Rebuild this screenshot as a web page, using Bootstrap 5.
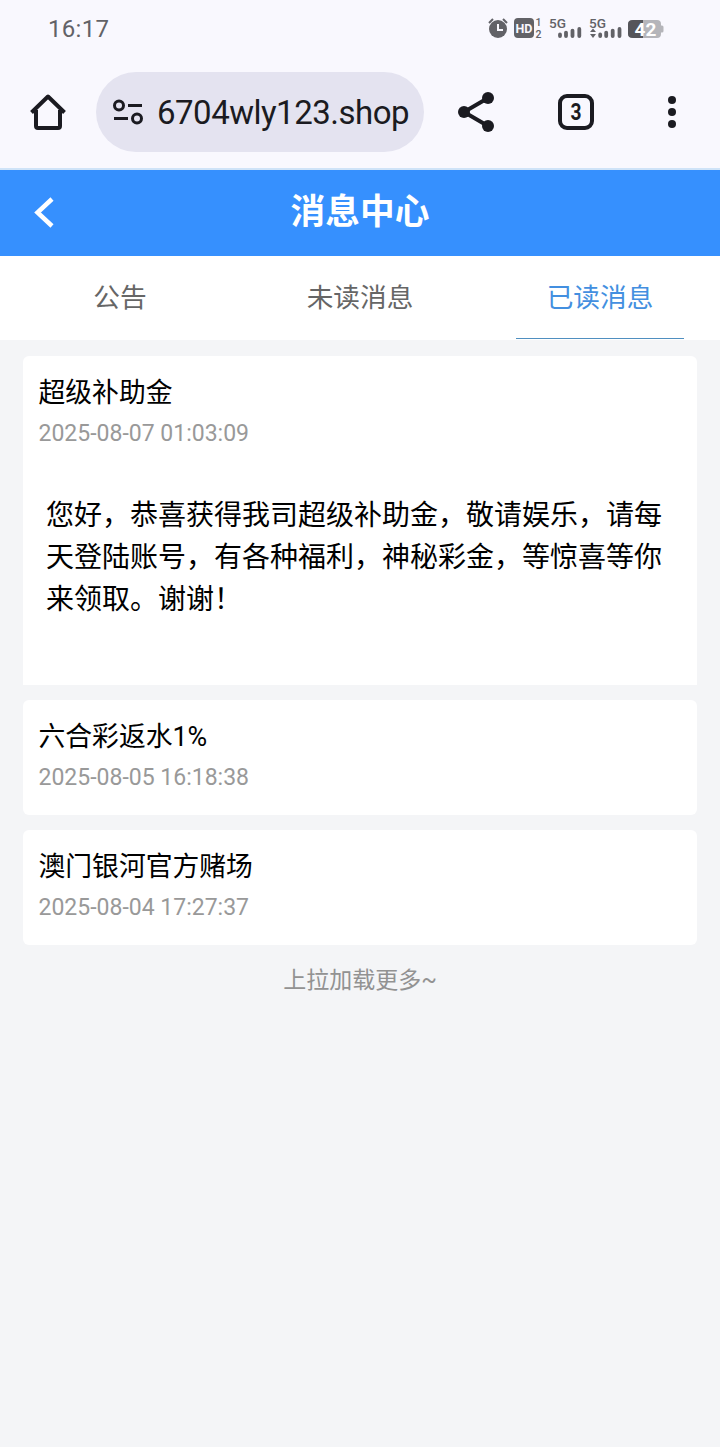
<!DOCTYPE html>
<html lang="zh-CN">
<head>
<meta charset="utf-8">
<meta name="viewport" content="width=device-width, initial-scale=1">
<title>消息中心</title>
<link href="https://cdn.jsdelivr.net/npm/bootstrap@5.3.0/dist/css/bootstrap.min.css" rel="stylesheet">
<style>
  body { font-family: Roboto, "Noto Sans CJK SC", sans-serif; background: #f4f5f7; color: #000; min-height: 1447px; }
  svg { display: block; flex: none; }
  svg text { font-family: Roboto, sans-serif; }
  .browser-top { background: #f9f8fe; height: 170px; border-bottom: 2px solid #cfe3f8; }
  .status-bar { height: 56px; padding: 0 54px 0 48px; color: #626267; }
  .clock { font-size: 24px; letter-spacing: .3px; line-height: 56px; padding-top: 2px; }
  .tool-bar { height: 112px; padding-left: 28px; color: #1b1b21; }
  .address { width: 328px; height: 80px; margin-left: 28px; padding-left: 16px; background: #e4e3f0; }
  .address-text { width: 250px; margin-left: 13px; font-size: 33px; letter-spacing: -.5px; line-height: 78px; padding-top: 2px; }
  .app-bar { height: 86px; background: #3690fe; color: #fff; }
  .app-bar h1 { font-size: 34.7px; line-height: 80px; padding-bottom: 2px; }
  .back-btn { width: 28px; margin-left: 30px; }
  .tabs { height: 84px; background: #fff; }
  .tabs .nav-link { font-size: 26.7px; line-height: 81px; height: 83px; padding: 2px 0 0; width: 168px; color: #666; border-bottom: 1px solid transparent; border-radius: 0; }
  .tabs .nav-link.active { color: #438fe0; border-color: #4f8fc0; }
  .messages { padding: 16px 23px 0; gap: 15px; }
  .message { border: 0; border-radius: 6px; }
  .message.opened { border-radius: 6px 6px 0 0; }
  .message-head { height: 115px; padding: 17px 15.5px 0; }
  .message-title { font-size: 26.8px; line-height: 41px; font-weight: 400; }
  .message-time { font-size: 23px; line-height: 40px; color: #999; }
  .message-body { font-size: 28px; line-height: 42px; height: 214px; padding: 24px 20px 0 23px; }
  .load-more { font-size: 23px; line-height: 70px; padding-top: 1px; color: #929292; }
</style>
</head>
<body>
<header class="browser-top">
  <div class="status-bar d-flex align-items-center justify-content-between">
    <span class="clock">16:17</span>
    <svg width="180" height="28" viewBox="486 14 180 28" fill="currentColor">
      <circle cx="498" cy="29" r="9"/>
      <path d="M489 23l4-4M507 23l-4-4" stroke="currentColor" stroke-width="2"/>
      <path d="M498 24v6h5" fill="none" stroke="#f9f8fe" stroke-width="2"/>
      <rect x="514" y="18" width="20" height="20" rx="4"/>
      <text x="515.5" y="32.500" font-size="12" font-weight="700" fill="#f9f8fe" textLength="17" lengthAdjust="spacingAndGlyphs">HD</text>
      <text x="535.5" y="26" font-size="10.5" font-weight="500">1</text>
      <text x="535.5" y="37.500" font-size="10.500" font-weight="500">2</text>
      <text x="549" y="27.700" font-size="13" font-weight="500" textLength="17" lengthAdjust="spacingAndGlyphs">5G</text>
      <g stroke="currentColor" stroke-width="3.8" stroke-linecap="round">
        <path d="M560 34.400v1.700M566 32.600v3.500M572.500 30.600v5.500M579.300 28.900v7.200"/>
        <path d="M600.200 34.400v1.700M606.200 32.600v3.500M612.700 30.600v5.500M619.500 28.900v7.200"/>
      </g>
      <text x="589" y="27.700" font-size="13" font-weight="500" textLength="17" lengthAdjust="spacingAndGlyphs">5G</text>
      <path d="M590 32l3-3.500 3 3.500zM590 34l3 4 3-4z"/>
      <path d="M633 20h24q4 0 4 4v10q0 4-4 4h-24q-5 0-5-4V24q0-4 5-4zM661 25.500h1q1.500 0 1.500 1.500v4q0 1.500-1.500 1.500h-1z" fill="#b5b5ba"/>
      <path d="M633 20h10v18h-10q-5 0-5-4V24q0-4 5-4z" fill="#55555a"/>
      <text x="645.5" y="35.700" font-size="19" font-weight="700" text-anchor="middle" fill="#fff">42</text>
    </svg>
  </div>
  <div class="tool-bar d-flex align-items-center">
    <svg width="40" height="40" viewBox="28 92 40 40" fill="none" stroke="currentColor" stroke-width="4">
      <path d="M36 110v16q0 2 2 2h20q2 0 2-2v-16"/>
      <path d="M31.500 112.500L48 96.500l16.500 16" stroke-linejoin="round"/>
    </svg>
    <div class="address rounded-pill d-flex align-items-center">
      <svg width="32" height="28" viewBox="112 98 32 28" fill="none" stroke="currentColor" stroke-width="3">
        <circle cx="119" cy="105.500" r="4.500"/><circle cx="137" cy="118.500" r="4.500"/>
        <path d="M128 105.500h14M114 118.500h14"/>
      </svg>
      <div class="address-text text-nowrap">6704wly123.shop</div>
    </div>
    <svg width="48" height="48" viewBox="452 88 48 48" style="margin-left:28px" fill="currentColor">
      <path d="M488 98l-24 14 24 14" fill="none" stroke="currentColor" stroke-width="4"/>
      <circle cx="488" cy="98" r="6"/><circle cx="464" cy="112" r="6"/><circle cx="488" cy="126" r="6"/>
    </svg>
    <svg width="40" height="40" viewBox="556 92 40 40" style="margin-left:56px">
      <rect x="560" y="96" width="32" height="32" rx="7" fill="none" stroke="currentColor" stroke-width="4"/>
      <text x="570.5" y="120" font-size="23" font-weight="700" fill="currentColor" textLength="11" lengthAdjust="spacingAndGlyphs">3</text>
    </svg>
    <svg width="12" height="36" viewBox="666 94 12 36" style="margin-left:70px" fill="currentColor">
      <circle cx="672" cy="100" r="4"/><circle cx="672" cy="112" r="4"/><circle cx="672" cy="124" r="4"/>
    </svg>
  </div>
</header>
<div class="app-bar d-flex align-items-center">
  <a href="#" class="back-btn text-white" aria-label="返回">
    <svg width="28" height="34" viewBox="30 196 28 34" fill="none" stroke="currentColor" stroke-width="4.500"><path d="M52 199L37.500 212.500 52 226"/></svg>
  </a>
  <h1 class="flex-grow-1 text-center fw-bold m-0">消息中心</h1>
  <div style="width:58px"></div>
</div>
<ul class="tabs nav text-center">
  <li class="nav-item col-4"><a class="nav-link mx-auto" href="#">公告</a></li>
  <li class="nav-item col-4"><a class="nav-link mx-auto" href="#">未读消息</a></li>
  <li class="nav-item col-4"><a class="nav-link mx-auto active" href="#">已读消息</a></li>
</ul>
<main class="messages d-flex flex-column">
  <article class="message opened card">
    <div class="message-head"><h2 class="message-title m-0">超级补助金</h2><div class="message-time">2025-08-07 01:03:09</div></div>
    <div class="message-body">您好，恭喜获得我司超级补助金，敬请娱乐，请每天登陆账号，有各种福利，神秘彩金，等惊喜等你来领取。谢谢！</div>
  </article>
  <article class="message card">
    <div class="message-head"><h2 class="message-title m-0">六合彩返水1%</h2><div class="message-time">2025-08-05 16:18:38</div></div>
  </article>
  <article class="message card">
    <div class="message-head"><h2 class="message-title m-0">澳门银河官方赌场</h2><div class="message-time">2025-08-04 17:27:37</div></div>
  </article>
</main>
<div class="load-more text-center">上拉加载更多~</div>
<script src="https://cdn.jsdelivr.net/npm/bootstrap@5.3.0/dist/js/bootstrap.bundle.min.js"></script>
</body>
</html>
